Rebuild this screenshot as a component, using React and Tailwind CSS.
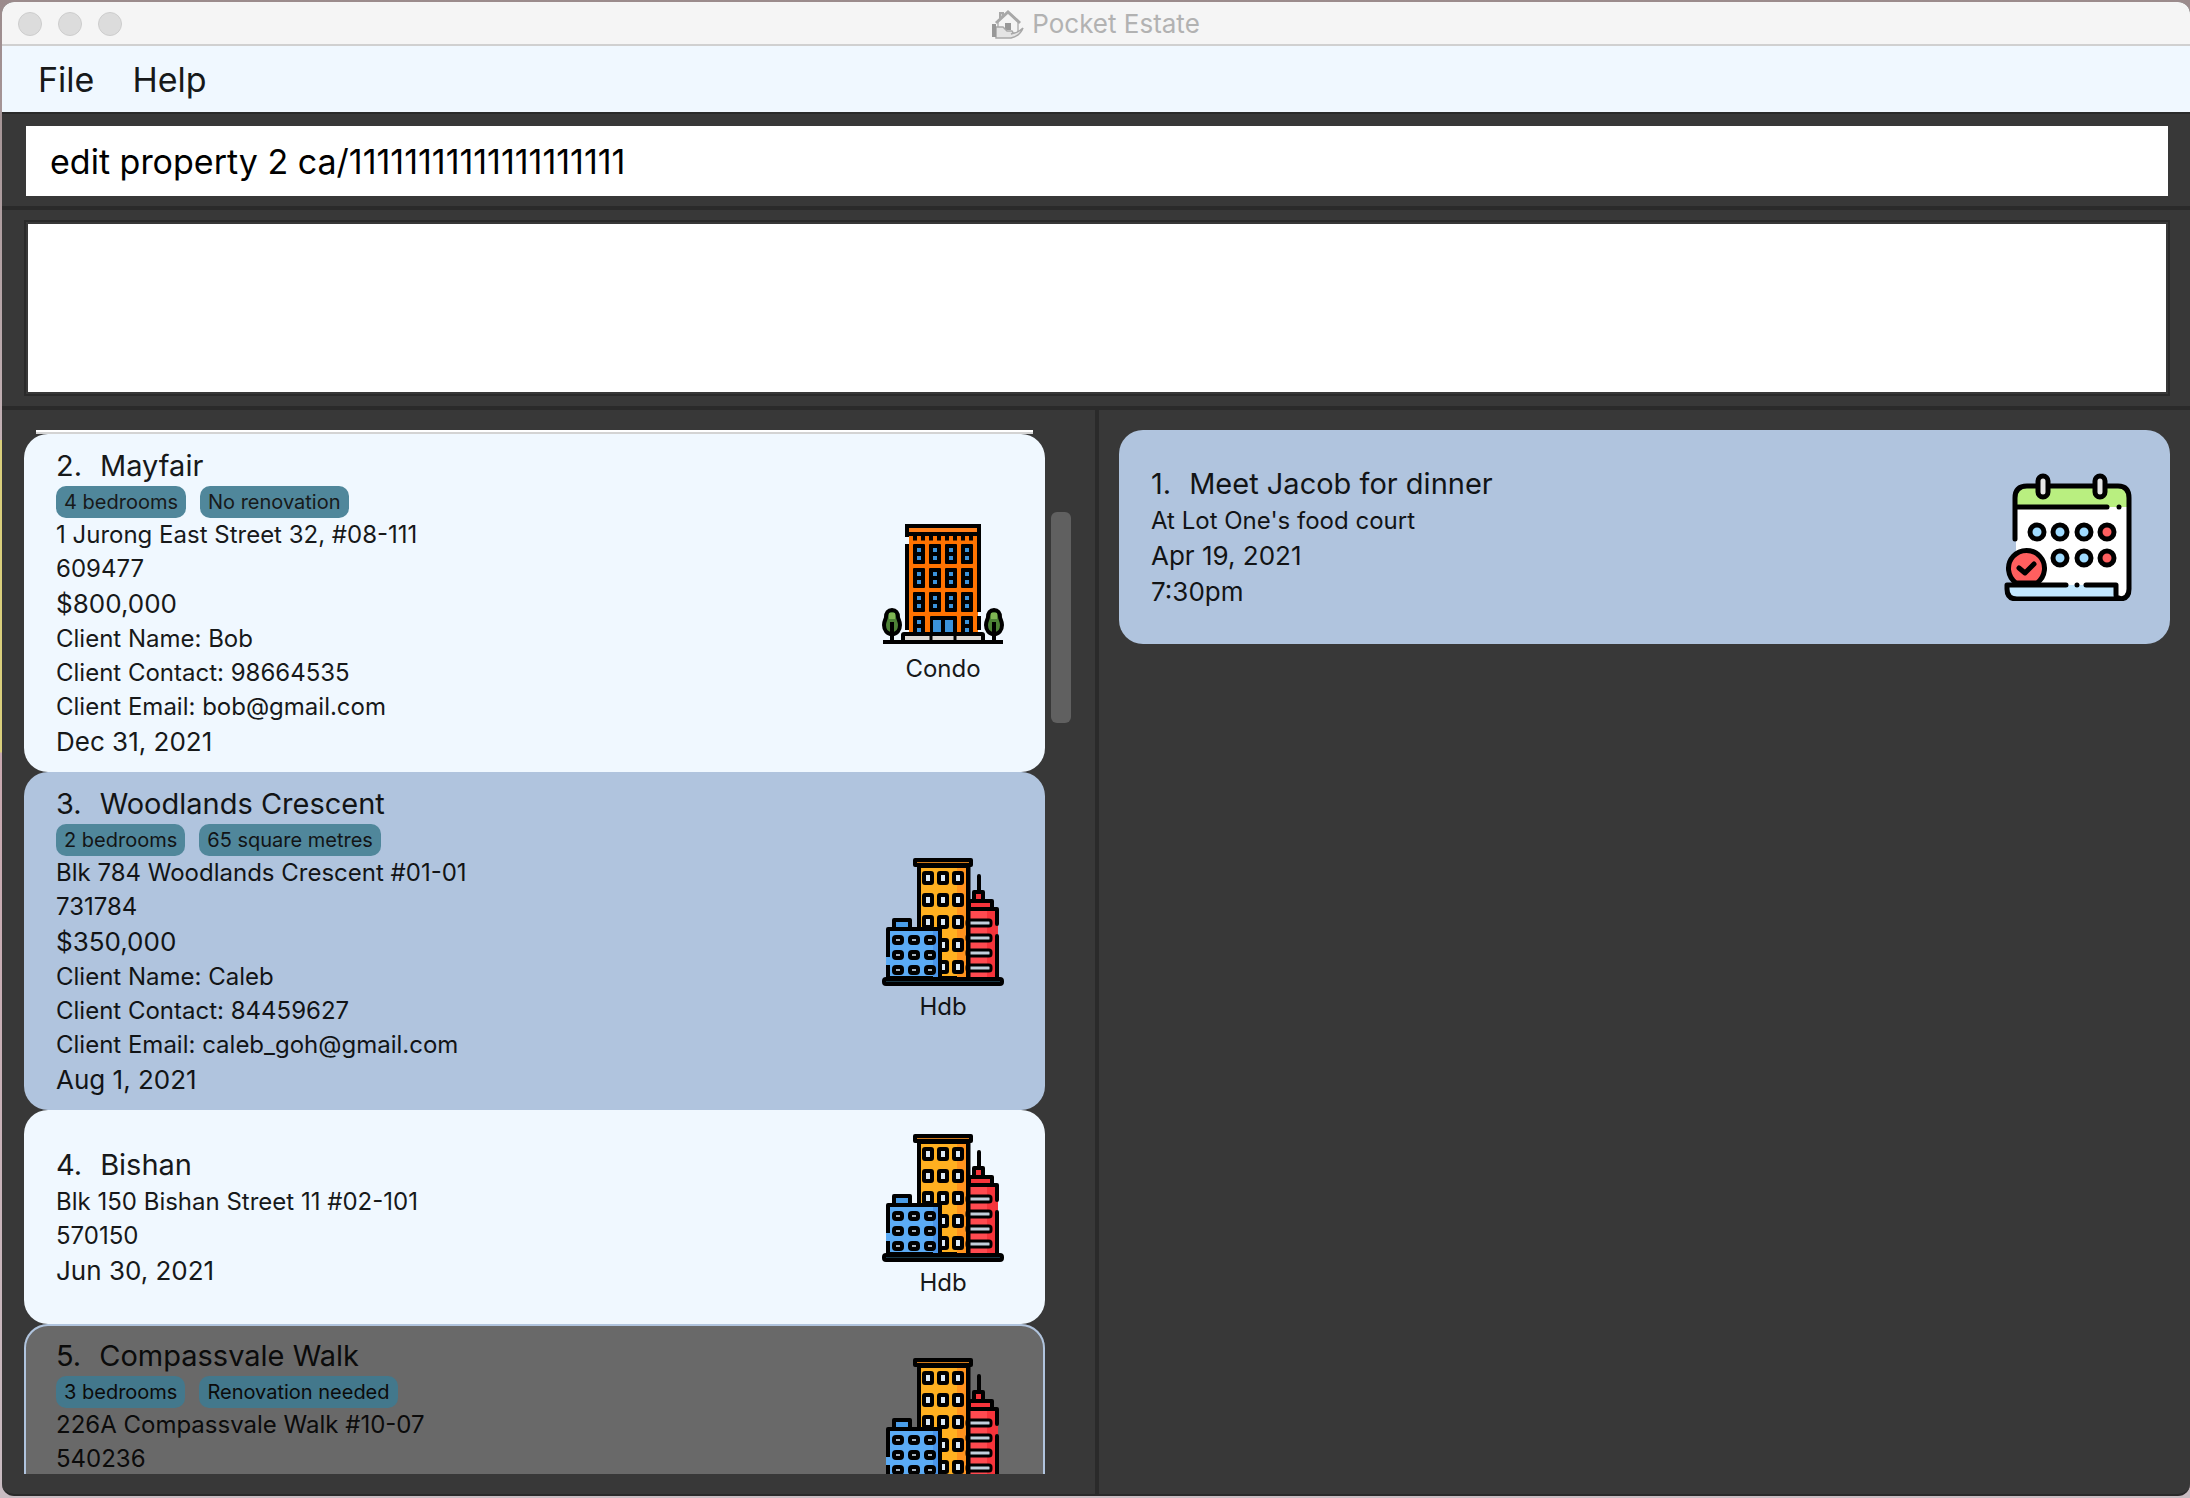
import React from "react";

const INK = "#000";

function CondoIcon() {
  const cols = [40, 56, 72, 88];
  const rows = [24, 48, 72];
  return (
    <svg viewBox="0 0 128 128" className="size-32" aria-hidden="true">
      <rect x="30" y="5" width="69" height="109" fill="#ff7300" />
      <path d="M28 17V6h72v11M28 24v86M100 17v75M100 96v14" fill="none" stroke={INK} strokeWidth="4" />
      <rect x="28" y="6" width="72" height="8" fill="#ff7f1a" stroke={INK} strokeWidth="4" />
      <path d="M28 13h72v3H28z" fill={INK} />
      <path d="M34 18h62" stroke={INK} strokeWidth="5" strokeDasharray="4 4" />
      {rows.map((y) =>
        cols.map((x) => (
          <g key={`${x}-${y}`}>
            <rect x={x - 6} y={y} width="12" height="20" rx="1" fill={INK} />
            <path d={`M${x - 2} ${y + 4}h4v4h-4zM${x - 2} ${y + 12}h4v4h-4z`} fill="#3b93dc" />
          </g>
        ))
      )}
      {[40, 88].map((x) => (
        <g key={x}>
          <rect x={x - 6} y="96" width="12" height="18" rx="1" fill={INK} />
          <path d={`M${x - 2} 100h4v4h-4zM${x - 2} 108h4v4h-4z`} fill="#3b93dc" />
        </g>
      ))}
      <rect x="51" y="96" width="27" height="18" rx="1" fill={INK} />
      <path d="M54 100h8v12h-8zM66 100h8v12h-8z" fill="#3b93dc" />
      <rect x="24" y="114" width="80" height="8" rx="1" fill="#dedad6" stroke={INK} strokeWidth="4" />
      <path d="M52 113v9M76 113v9" stroke={INK} strokeWidth="3" />
      <path d="M4 122h120" stroke={INK} strokeWidth="4" />
      {[13, 115].map((x) => (
        <g key={x} transform={`translate(${x} 0)`}>
          <path
            d="M0 90c4 0 6 3 6 7 0 2 2 4 2 8 0 5-3 9-8 9s-8-4-8-9c0-4 2-6 2-8 0-4 2-7 6-7z"
            fill="#4d8236"
            stroke={INK}
            strokeWidth="4"
          />
          <path d="M-3 93h6v6h-6z" fill="#7fb554" />
          <path d="M0 102v18" stroke={INK} strokeWidth="4" />
        </g>
      ))}
    </svg>
  );
}

function HdbIcon() {
  return (
    <svg viewBox="0 0 128 128" className="size-32" aria-hidden="true">
      <g stroke={INK} strokeWidth="4" strokeLinejoin="round" strokeLinecap="round">
        <path d="M40 8h49v112H40z" fill="#ffb020" />
        <path d="M78 10h9v110h-9z" fill="#ff931e" stroke="none" />
        <path d="M36 2h56v5H36z" fill="#d27a1c" />
        <path d="M91 50h28v70H91z" fill="#f6343b" stroke="none" />
        <path d="M91 50h17v70H91z" fill="#ff4a50" stroke="none" />
        <path d="M90 43h23v8H90zM95 34h9v9h-9z" fill="#f6343b" />
        <path d="M100 18v16M91 51h27v15M118 78v42" fill="none" />
      </g>
      {[65, 80, 95, 110].map((y) => (
        <rect key={y} x="88" y={y - 3} width="24" height="6" rx="2" fill="#c3cfdb" stroke={INK} strokeWidth="3" />
      ))}
      <path d="M90 8v112" stroke={INK} strokeWidth="3" />
      {[20, 42, 64, 87, 109].map((y) =>
        [49, 64, 79].map((x) => (
          <rect key={`${x}-${y}`} x={x - 4} y={y - 5} width="8" height="10" rx="1" fill="#dceaf7" stroke={INK} strokeWidth="4" />
        ))
      )}
      <g stroke={INK} strokeWidth="4" strokeLinejoin="round">
        <path d="M15 62h16v9H15z" fill="#4a9de8" />
        <path d="M9 71h52v49H9z" fill="#5babf5" />
        <path d="M54 73h5v46h-5z" fill="#4a95ea" stroke="none" />
      </g>
      <path d="M7 99h4v8H7z" fill="#5babf5" />
      {[82, 97, 112].map((y) =>
        [19, 35, 51].map((x) => (
          <rect key={`${x}-${y}`} x={x - 4} y={y - 3} width="8" height="6" rx="2" fill="#a9b4bf" stroke={INK} strokeWidth="4" />
        ))
      )}
      <rect x="5" y="121" width="118" height="5" rx="2" fill="#193846" stroke={INK} strokeWidth="4" />
    </svg>
  );
}

function CalendarIcon() {
  return (
    <svg viewBox="0 0 128 128" className="size-32" aria-hidden="true">
      <path d="M12 24q0-10 10-10h92q10 0 10 10v92q0 9-9 9H12z" fill="#fff" />
      <path d="M12 34V24q0-10 10-10h92q10 0 10 10v10z" fill="#b9ef80" />
      <g fill="none" stroke={INK} strokeWidth="5" strokeLinecap="round" strokeLinejoin="round">
        <path d="M11 66V25q0-12 12-12h91q11 0 11 12v91q0 10-10 10" />
        <path d="M4 112h108v8q0 6 5 6H13q-9 0-9-10z" fill="#c3e8ff" stroke="none" />
        <path d="M3 112h59M82 112h30v10q0 3 3 3M3 112v4q0 10 10 10h102" />
        <path d="M12 34h91M115 34h0M73 112h0" />
        <rect x="34" y="3" width="10" height="21" rx="5" fill="#e6e6e6" />
        <rect x="91" y="3" width="10" height="21" rx="5" fill="#e6e6e6" />
      </g>
      <g stroke={INK} strokeWidth="5">
        {[33, 56, 80].map((x) => (
          <circle key={x} cx={x} cy="59" r="7" fill="#9fdbff" />
        ))}
        {[56, 80].map((x) => (
          <circle key={x} cx={x} cy="85" r="7" fill="#9fdbff" />
        ))}
        <circle cx="103" cy="59" r="7" fill="#ff5f5f" />
        <circle cx="103" cy="85" r="7" fill="#ff5f5f" />
        <path d="M12 110A18 18 0 1 1 33 110z" fill="#ff5f5f" />
        <path d="M15 95l6 5 9-9" fill="none" strokeLinecap="round" strokeLinejoin="round" />
      </g>
    </svg>
  );
}

function AppIcon() {
  return (
    <svg viewBox="0 0 32 30" className="h-[30px] w-8" fill="#f4f4f4" stroke="#a8a8a8" strokeWidth="2" aria-hidden="true">
      <path d="M8 9V4h3v3" fill="#cfcfcf" />
      <path d="M6 12v12h20V12L16 3z" stroke="#c4c4c4" />
      <path d="M4 14L16 3l12 11" fill="none" strokeWidth="3" />
      <path d="M13 14h6v7h-6z" fill="#989898" stroke="none" />
      <path d="M4 18h7l4 4h5q2 2-1 3 7-1 12-6-3 8-12 10H4z" fill="#e4e4e4" strokeWidth="1.5" />
      <path d="M0 15h4v13H0z" fill="#989898" stroke="none" />
    </svg>
  );
}

const ICONS = { Condo: CondoIcon, Hdb: HdbIcon };

const PROPERTIES = [
  {
    id: 2,
    name: "Mayfair",
    tags: ["4 bedrooms", "No renovation"],
    lines: ["1 Jurong East Street 32, #08-111", "609477"],
    price: "$800,000",
    client: ["Client Name: Bob", "Client Contact: 98664535", "Client Email: bob@gmail.com"],
    date: "Dec 31, 2021",
    type: "Condo",
    style: "bg-[#f0f8ff] text-[#17191a]",
  },
  {
    id: 3,
    name: "Woodlands Crescent",
    tags: ["2 bedrooms", "65 square metres"],
    lines: ["Blk 784 Woodlands Crescent #01-01", "731784"],
    price: "$350,000",
    client: ["Client Name: Caleb", "Client Contact: 84459627", "Client Email: caleb_goh@gmail.com"],
    date: "Aug 1, 2021",
    type: "Hdb",
    style: "bg-[#b0c4de] text-[#121416]",
  },
  {
    id: 4,
    name: "Bishan",
    tags: [],
    lines: ["Blk 150 Bishan Street 11 #02-101", "570150"],
    client: [],
    date: "Jun 30, 2021",
    type: "Hdb",
    style: "bg-[#f0f8ff] text-[#17191a]",
  },
  {
    id: 5,
    name: "Compassvale Walk",
    tags: ["3 bedrooms", "Renovation needed"],
    lines: ["226A Compassvale Walk #10-07", "540236"],
    client: [],
    type: "Hdb",
    selected: true,
    style: "min-h-[234px] bg-[#696969] text-[#0b0b0b] shadow-[inset_0_0_0_2px_#b0c4de]",
  },
];

function CardTitle({ id, name }) {
  return (
    <h2 className="flex gap-[18px] text-[29px] leading-10">
      <span>{id}.</span>
      <span>{name}</span>
    </h2>
  );
}

function PropertyCard({ property }) {
  const Icon = ICONS[property.type];
  const hasTags = property.tags.length > 0;
  return (
    <li className={`flex min-h-[214px] shrink-0 items-center justify-between rounded-3xl pr-[38px] pl-8 ${property.style}`}>
      <div className={hasTags ? "self-start py-3" : ""}>
        <CardTitle id={property.id} name={property.name} />
        {hasTags && (
          <div className="flex gap-[14px]">
            {property.tags.map((tag) => (
              <span
                key={tag}
                className={`rounded-[10px] px-2 text-xl leading-8 ${property.selected ? "bg-[#43788c]" : "bg-[#50879b]"}`}
              >
                {tag}
              </span>
            ))}
          </div>
        )}
        {property.lines.map((line) => (
          <p key={line} className="text-2xl leading-[34px]">{line}</p>
        ))}
        {property.price && <p className="text-[26px] leading-9">{property.price}</p>}
        {property.client.map((line) => (
          <p key={line} className="text-2xl leading-[34px]">{line}</p>
        ))}
        {property.date && <p className="text-[26px] leading-9">{property.date}</p>}
      </div>
      <div className="flex flex-col items-center gap-1">
        <Icon />
        <p className="text-2xl leading-[34px]">{property.type}</p>
      </div>
    </li>
  );
}

export default function App() {
  return (
    <div className="flex h-screen flex-col overflow-hidden bg-[linear-gradient(#9b8b8c_0px,#c3b1b5_440px,#d9cf7c_440px,#d9cf7c_752px,#c9a9b0_753px,#c9bcc2_100%)] pt-[2px] pb-[2px] pl-[2px] font-['Inter','Liberation_Sans',sans-serif]">
      <div className="flex min-h-0 flex-1 flex-col overflow-hidden rounded-xl border-b-2 border-[#2a2a2a] bg-[#383838]">
        <header className="flex h-11 shrink-0 items-center border-b-2 border-[#d0d0d0] bg-[#f5f5f5] px-4 pt-[2px]">
          <div className="flex flex-1 gap-4">
            <button aria-label="Close" className="size-6 rounded-full border border-[#cdcdcd] bg-[#dcdcdc]" />
            <button aria-label="Minimize" className="size-6 rounded-full border border-[#cdcdcd] bg-[#dcdcdc]" />
            <button aria-label="Zoom" className="size-6 rounded-full border border-[#cdcdcd] bg-[#dcdcdc]" />
          </div>
          <div className="flex items-center gap-2 text-[26px] leading-9 text-[#b2b2b2]">
            <AppIcon />
            <h1>Pocket Estate</h1>
          </div>
          <div className="flex-1" />
        </header>

        <nav className="flex h-[66px] shrink-0 items-center gap-[38px] bg-[#f0f8ff] px-9 text-[34px] text-[#17191a]">
          <button>File</button>
          <button>Help</button>
        </nav>

        <div className="shrink-0 border-t-2 border-b-4 border-[#2a2a2a] pt-3 pr-[22px] pb-[10px] pl-6">
          <input
            aria-label="Command"
            defaultValue="edit property 2 ca/11111111111111111111"
            className="block h-[70px] w-full bg-white px-6 text-[34px] text-black outline-none"
          />
        </div>

        <div className="shrink-0 border-b-4 border-[#2a2a2a] py-[10px] pr-5 pl-[22px]">
          <div className="border-2 border-[#2a2a2a]">
            <textarea
              aria-label="Result"
              readOnly
              className="block h-[172px] w-full resize-none border-2 border-[#383838] bg-white outline-none"
            />
          </div>
        </div>

        <main className="flex min-h-0 flex-1">
          <section aria-label="Properties" className="flex min-w-0 flex-1 gap-[6px] border-r-4 border-[#2a2a2a] pt-5 pr-5 pb-5 pl-[22px]">
            <ul className="flex min-w-0 flex-1 flex-col overflow-hidden">
              <li aria-hidden="true" className="mx-3 h-1 shrink-0 border-b-2 border-[#d3d3d3] bg-white" />
              {PROPERTIES.map((p) => (
                <PropertyCard key={p.id} property={p} />
              ))}
            </ul>
            <div className="w-6 pt-[82px] pr-1">
              <div className="h-[211px] rounded-md bg-[#606060]" />
            </div>
          </section>
          <section aria-label="Appointments" className="min-w-0 flex-1 p-5">
            <ul>
              <li className="flex min-h-[214px] items-center justify-between rounded-3xl bg-[#b0c4de] pr-[38px] pl-8 text-[#121416]">
                <div>
                  <CardTitle id={1} name="Meet Jacob for dinner" />
                  <p className="text-2xl leading-[34px]">At Lot One's food court</p>
                  <p className="text-[26px] leading-9">Apr 19, 2021</p>
                  <p className="text-[26px] leading-9">7:30pm</p>
                </div>
                <CalendarIcon />
              </li>
            </ul>
          </section>
        </main>
      </div>
    </div>
  );
}
